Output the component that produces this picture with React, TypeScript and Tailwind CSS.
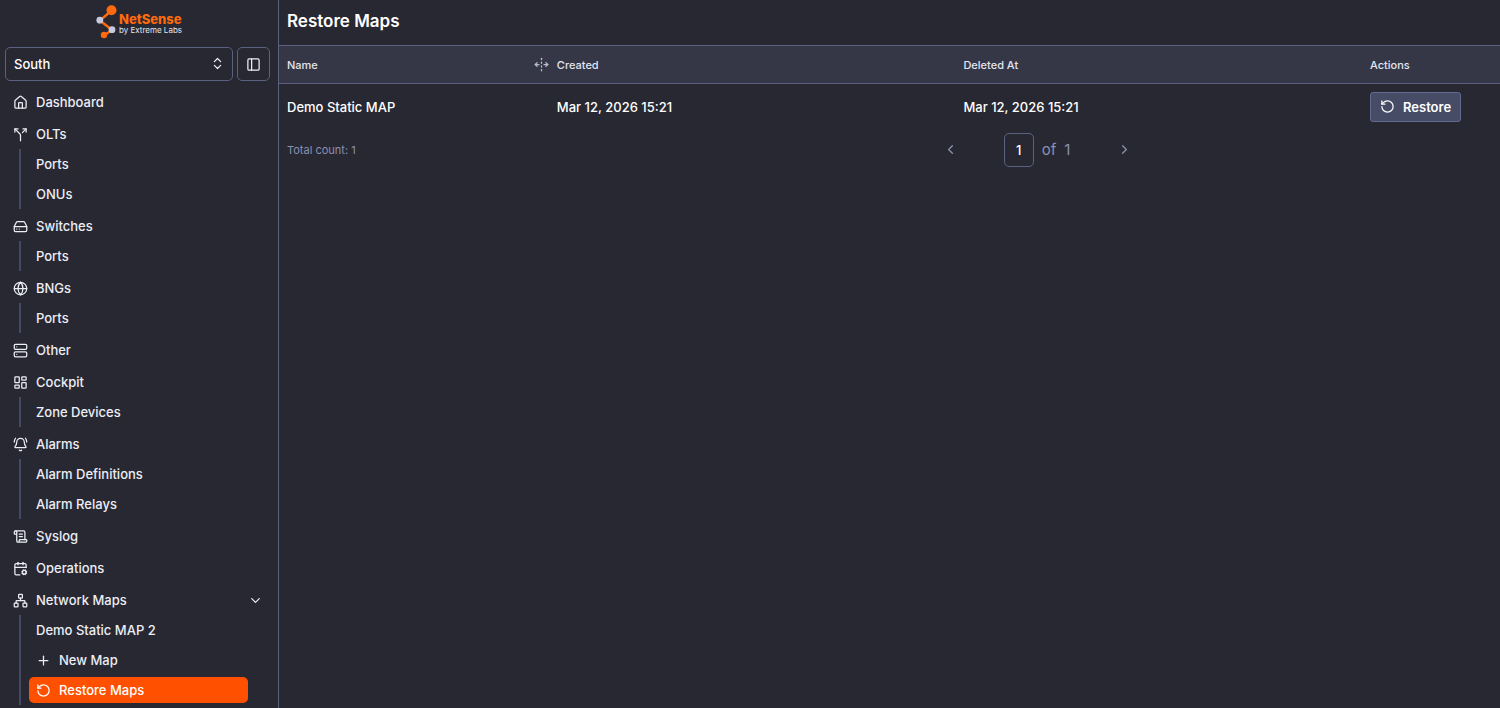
import React, { useState } from "react";
import {
  BellRing,
  CalendarCog,
  ChevronDown,
  ChevronLeft,
  ChevronRight,
  ChevronsUpDown,
  Globe,
  HardDrive,
  House,
  LayoutDashboard,
  Network,
  PanelLeft,
  Plus,
  RotateCcw,
  ScrollText,
  Server,
  Split,
  UnfoldHorizontal,
  type LucideIcon,
} from "lucide-react";

type NavChild = {
  label: string;
  icon?: LucideIcon;
};

type NavGroup = {
  label: string;
  icon: LucideIcon;
  collapsible?: boolean;
  children?: NavChild[];
};

const navGroups: NavGroup[] = [
  { label: "Dashboard", icon: House },
  { label: "OLTs", icon: Split, children: [{ label: "Ports" }, { label: "ONUs" }] },
  { label: "Switches", icon: HardDrive, children: [{ label: "Ports" }] },
  { label: "BNGs", icon: Globe, children: [{ label: "Ports" }] },
  { label: "Other", icon: Server },
  { label: "Cockpit", icon: LayoutDashboard, children: [{ label: "Zone Devices" }] },
  {
    label: "Alarms",
    icon: BellRing,
    children: [{ label: "Alarm Definitions" }, { label: "Alarm Relays" }],
  },
  { label: "Syslog", icon: ScrollText },
  { label: "Operations", icon: CalendarCog },
  {
    label: "Network Maps",
    icon: Network,
    collapsible: true,
    children: [
      { label: "Demo Static MAP 2" },
      { label: "New Map", icon: Plus },
      { label: "Restore Maps", icon: RotateCcw },
    ],
  },
];

const deletedMaps = [
  { id: 1, name: "Demo Static MAP", created: "Mar 12, 2026 15:21", deletedAt: "Mar 12, 2026 15:21" },
];

function Logo() {
  return (
    <a href="#" className="flex h-[43px] items-center justify-center gap-[2px]">
      <svg width="21" height="34" viewBox="0 0 21 34" fill="none" aria-hidden="true">
        <path d="M15 6L4 15.5L16 25L8 30.5" stroke="#ff6a0c" strokeWidth="2.4" />
        <circle cx="15.5" cy="5.2" r="5" fill="#ff6a0c" />
        <circle cx="3.8" cy="15.2" r="3.4" fill="#c5cae0" />
        <circle cx="16" cy="24.7" r="3.4" fill="#c5cae0" />
        <circle cx="8" cy="30" r="3.2" fill="#ff6a0c" />
      </svg>
      <span className="flex flex-col pt-1">
        <span className="text-[13px] leading-[12px] font-extrabold text-[#ff6a0c]">NetSense</span>
        <span className="text-[8px] leading-[10px] font-normal text-[#e2e4f0]">by Extreme Labs</span>
      </span>
    </a>
  );
}

function NavItem({ group }: { group: NavGroup }) {
  const [open, setOpen] = useState(true);
  const Icon = group.icon;

  return (
    <li>
      {group.collapsible ? (
        <button
          type="button"
          aria-expanded={open}
          onClick={() => setOpen(!open)}
          className="flex h-[30px] w-full items-center gap-2 px-[7px]"
        >
          <Icon size={15} />
          {group.label}
          <ChevronDown size={15} className="ml-auto" />
        </button>
      ) : (
        <a href="#" className="flex h-[30px] items-center gap-2 px-[7px]">
          <Icon size={15} />
          {group.label}
        </a>
      )}
      {open && group.children && (
        <ul className="ml-[13px] border-l-2 border-[#444a64] pr-[22px] pl-2">
          {group.children.map((child) => {
            const ChildIcon = child.icon;
            const active = child.label === "Restore Maps";
            return (
              <li key={child.label} className="flex h-[30px] items-center">
                <a
                  href="#"
                  aria-current={active ? "page" : undefined}
                  className={`flex h-[26px] w-full items-center gap-2 rounded-[5px] px-[7px] ${
                    active ? "bg-[#ff5000] text-white" : ""
                  }`}
                >
                  {ChildIcon && <ChildIcon size={15} />}
                  {child.label}
                </a>
              </li>
            );
          })}
        </ul>
      )}
    </li>
  );
}

function Sidebar() {
  return (
    <aside className="w-[279px] shrink-0 border-r border-[#5b6180]">
      <Logo />
      <div className="flex gap-1 px-[5px] pt-1 pr-2">
        <div className="relative flex-1">
          <select
            aria-label="Region"
            defaultValue="South"
            className="h-[34px] w-full appearance-none rounded-[5px] border border-[#5b6180] bg-transparent px-2 text-white"
          >
            <option>South</option>
          </select>
          <ChevronsUpDown size={15} className="pointer-events-none absolute top-[9px] right-2" />
        </div>
        <button
          type="button"
          aria-label="Toggle sidebar"
          className="flex h-[34px] w-[33px] items-center justify-center rounded-[5px] border border-[#5b6180]"
        >
          <PanelLeft size={15} />
        </button>
      </div>
      <nav className="pt-[6px] pr-2 pl-[6px]">
        <ul className="flex flex-col gap-[2px]">
          {navGroups.map((group) => (
            <NavItem key={group.label} group={group} />
          ))}
        </ul>
      </nav>
    </aside>
  );
}

function MapsTable() {
  return (
    <table className="w-full table-fixed text-left">
      <thead className="border-t border-b border-[#5b6180] bg-[#353746] text-[11px] text-[#e2e4f0]">
        <tr className="h-[38px]">
          <th className="w-[22.1%] pl-2 font-medium">
            <span className="flex items-center justify-between">
              Name
              <UnfoldHorizontal size={15} className="text-[#b9bdd0]" />
            </span>
          </th>
          <th className="w-[33.3%] px-2 font-medium">Created</th>
          <th className="w-[33.3%] px-2 font-medium">Deleted At</th>
          <th className="px-2 font-medium">Actions</th>
        </tr>
      </thead>
      <tbody className="font-medium text-white">
        {deletedMaps.map((map) => (
          <tr key={map.id} className="h-[46px]">
            <td className="px-2">{map.name}</td>
            <td className="px-2">{map.created}</td>
            <td className="px-2">{map.deletedAt}</td>
            <td className="px-2">
              <button
                type="button"
                className="flex h-[30px] items-center gap-2 rounded-[3px] border border-[#626a8e] bg-[#464b66] px-[9px] font-semibold"
              >
                <RotateCcw size={15} />
                Restore
              </button>
            </td>
          </tr>
        ))}
      </tbody>
    </table>
  );
}

function Pagination() {
  const [page, setPage] = useState("1");

  return (
    <div className="flex items-center pt-[3px] text-[#8b90b0]">
      <div className="w-[53.9%] pl-2 text-[11px] font-normal">Total count: {deletedMaps.length}</div>
      <div className="flex items-center">
        <button type="button" aria-label="Previous page" className="flex size-[26px] items-center justify-center">
          <ChevronLeft size={15} />
        </button>
        <div className="flex w-[148px] items-center justify-center gap-2">
          <input
            aria-label="Page"
            value={page}
            onChange={(e) => setPage(e.target.value)}
            className="h-[34px] w-[30px] rounded-[5px] border border-[#5b6180] bg-transparent text-center font-medium text-white"
          />
          <span className="flex gap-2 text-[15px] font-normal">
            <span>of</span>
            <span>1</span>
          </span>
        </div>
        <button type="button" aria-label="Next page" className="flex size-[26px] items-center justify-center">
          <ChevronRight size={15} />
        </button>
      </div>
    </div>
  );
}

export default function App() {
  return (
    <div className="flex min-h-screen bg-[#282833] font-['Inter',sans-serif] text-[13px] leading-5 font-medium text-[#eceef6]">
      <Sidebar />
      <main className="min-w-0 flex-1">
        <h1 className="flex h-[45px] items-center px-2 pb-1 text-[17px] font-semibold text-white">Restore Maps</h1>
        <MapsTable />
        <Pagination />
      </main>
    </div>
  );
}
